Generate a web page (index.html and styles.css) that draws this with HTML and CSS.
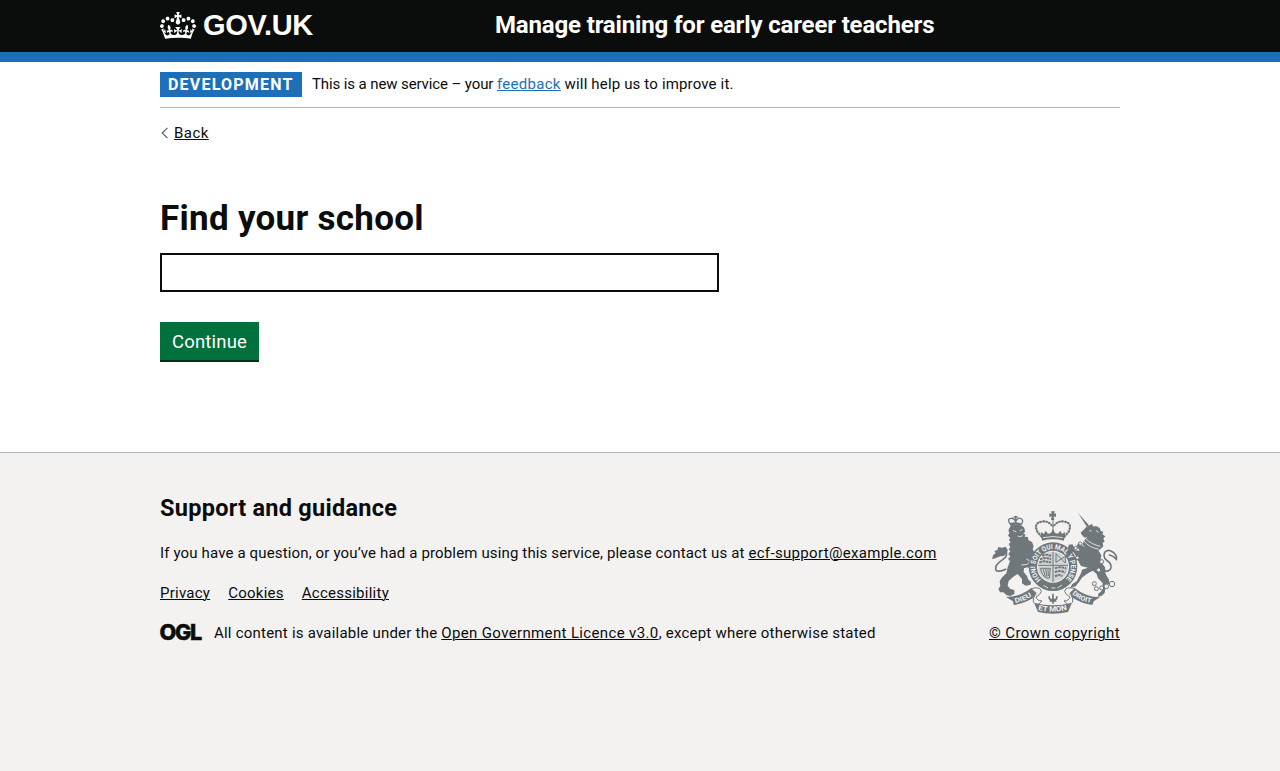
FILE: index.html
```html
<!DOCTYPE html>
<html lang="en">
<head>
<meta charset="utf-8">
<title>Find your school</title>
<link rel="stylesheet" href="styles.css">
</head>
<body>
<header class="header">
  <div class="container header-row">
    <a class="logo" href="#">
      <svg class="crown" viewBox="0 0 132 97" preserveAspectRatio="none" aria-hidden="true"><path fill="currentColor" fill-rule="evenodd" d="M25 30.2c3.5 1.5 7.7-.2 9.1-3.7 1.5-3.6-.2-7.8-3.9-9.2-3.6-1.4-7.6.3-9.1 3.9-1.4 3.5.3 7.5 3.9 9zM9 39.5c3.6 1.5 7.8-.2 9.2-3.7 1.5-3.6-.2-7.8-3.9-9.1-3.6-1.5-7.6.2-9.1 3.8-1.4 3.5.3 7.5 3.8 9zM4.4 57.2c3.5 1.5 7.7-.2 9.1-3.8 1.5-3.6-.2-7.7-3.9-9.1-3.5-1.5-7.6.3-9.1 3.8-1.4 3.5.3 7.6 3.9 9.1zm38.3-21.4c3.5 1.5 7.7-.2 9.1-3.8 1.5-3.6-.2-7.7-3.9-9.1-3.6-1.5-7.6.3-9.1 3.8-1.3 3.6.4 7.7 3.9 9.1zm64.4-5.6c-3.6 1.5-7.8-.2-9.1-3.7-1.5-3.6.2-7.8 3.8-9.2 3.6-1.4 7.7.3 9.2 3.9 1.3 3.5-.4 7.5-3.9 9zm15.9 9.3c-3.6 1.5-7.7-.2-9.1-3.7-1.5-3.6.2-7.8 3.7-9.1 3.6-1.5 7.7.2 9.2 3.8 1.5 3.5-.3 7.5-3.8 9zm4.7 17.7c-3.6 1.5-7.8-.2-9.2-3.8-1.5-3.6.2-7.7 3.9-9.1 3.6-1.5 7.7.3 9.2 3.8 1.3 3.5-.4 7.6-3.9 9.1zM89.3 35.8c-3.6 1.5-7.8-.2-9.2-3.8-1.4-3.6.2-7.7 3.9-9.1 3.6-1.5 7.7.3 9.2 3.8 1.4 3.6-.3 7.7-3.9 9.1zM69.7 17.7l8.9 4.7V9.3l-8.9 2.8c-.2-.3-.5-.6-.9-.9L72.4 0H59.6l3.5 11.2c-.3.3-.6.5-.9.9l-8.8-2.8v13.1l8.8-4.7c.3.3.6.7.9.9l-5 15.4v.1c-.2.8-.4 1.6-.4 2.4 0 4.1 3.1 7.5 7 8.1h.2c.3 0 .7.1 1 .1.4 0 .7 0 1-.1h.2c4-.6 7.1-4.1 7.1-8.1 0-.8-.1-1.7-.4-2.4V34l-5.1-15.4c.4-.2.7-.6 1-.9zM66 92.8c16.9 0 32.8 1.1 47.1 3.2 4-16.9 8.9-26.7 14-33.5l-9.6-3.4c1 4.9 1.1 7.2 0 10.2-1.5-1.4-3-4.3-4.2-8.7L108.6 76c2.8-2 5-3.2 7.5-3.3-4.4 9.4-10 11.9-13.6 11.2-4.3-.8-6.3-4.6-5.6-7.9 1-4.7 5.7-5.9 8-.5 4.3-8.7-3-11.4-7.6-8.8 7.1-7.2 7.9-13.5 2.1-21.1-8 6.1-8.1 12.3-4.5 20.8-4.7-5.4-12.1-2.5-9.5 6.2 3.4-5.2 7.9-2 7.2 3.1-.6 4.3-6.4 7.8-13.5 7.2-10.3-.9-10.9-8-11.2-13.8 2.5-.5 7.1 1.8 11 7.3L80.2 60c-4.1 4.4-8 5.3-12.3 5.4 1.4-4.4 8-11.6 8-11.6H55.5s6.4 7.2 7.9 11.6c-4.2-.1-8-1-12.3-5.4l1.4 16.4c3.9-5.5 8.5-7.7 10.9-7.3-.3 5.8-.9 12.8-11.1 13.8-7.2.6-12.9-2.9-13.5-7.2-.7-5 3.8-8.3 7.1-3.1 2.7-8.7-4.6-11.6-9.4-6.2 3.7-8.5 3.6-14.7-4.6-20.8-5.8 7.6-5 13.9 2.2 21.1-4.7-2.6-11.9.1-7.7 8.8 2.3-5.5 7.1-4.2 8.1.5.7 3.3-1.3 7.1-5.7 7.9-3.5.7-9-1.8-13.5-11.2 2.5.1 4.7 1.3 7.5 3.3l-4.7-15.4c-1.2 4.4-2.7 7.2-4.3 8.7-1.1-3-.9-5.3 0-10.2l-9.5 3.4c5 6.9 9.9 16.7 14 33.5 14.8-2.1 30.8-3.2 47.7-3.2z"/></svg>
      <span class="logo-text">GOV.UK</span>
    </a>
    <a class="service-name" href="#">Manage training for early career teachers</a>
  </div>
</header>
<div class="container">
  <div class="phase-banner">
    <strong class="tag">DEVELOPMENT</strong>
    <span class="phase-text">This is a new service – your <a class="link-blue" href="#">feedback</a><span class="phase-rest"> will help us to improve it.</span></span>
  </div>
  <div class="back-row">
    <svg class="chevron" viewBox="0 0 8 12" aria-hidden="true"><path d="M6.5 .8L1.1 6 6.5 11.2" fill="none" stroke="#505a5f" stroke-width="1.1"/></svg>
    <a class="back-link" href="#">Back</a>
  </div>
  <main class="main">
    <h1 class="heading"><label for="school">Find your school</label></h1>
    <input class="input" id="school" type="text">
    <button class="button" type="button">Continue</button>
  </main>
</div>
<footer class="footer">
  <div class="container footer-row">
    <div class="footer-main">
      <h2 class="footer-heading">Support and guidance</h2>
      <p class="footer-line support">If you have a question, or you’ve had a problem using this service, please contact us at <a class="email" href="#">ecf-support@example.com</a></p>
      <nav class="footer-links"><a href="#">Privacy</a><a href="#">Cookies</a><a href="#">Accessibility</a></nav>
      <div class="licence">
        <svg class="ogl" viewBox="0 0 41 18" role="img"><text x="-.6" y="16.5" textLength="41.5" lengthAdjust="spacingAndGlyphs">OGL</text></svg>
        <span class="licence-text">All content is available under the <a class="licence-link" href="#">Open Government Licence v3.0</a>, except where otherwise stated</span>
      </div>
    </div>
    <a class="copyright" href="#">
      <svg class="arms" viewBox="27 30 393 312" aria-hidden="true">
        <defs>
          <path id="ring" d="M183 239A53 53 0 1 1 255 239"/>
          <path id="left-ribbon" d="M106 309Q135 304 159 285"/>
          <path id="mid-ribbon" d="M174 330Q218 340 264 329"/>
          <path id="right-ribbon" d="M276 282Q300 304 336 309"/>
        </defs>
        <!-- lion -->
        <g class="solid">
          <path d="M93 76Q111 70 126 78L133 83L135 95L130 103L137 102L134 110L144 111L145 120L156 126L161 139L158 148L164 158L158 168L160 181L168 192L175 198L183 209L176 214L167 207L173 217L184 229L187 238L177 241L166 231L155 209L143 202L132 205L131 216L141 228L145 239L153 245L152 254L137 257L126 250L126 237L113 222L99 231L86 243L83 257L91 267L103 270L103 282L91 288L80 286L70 277L60 277L55 266L61 259L59 244L65 233L79 220L83 202L90 184L84 176L91 170L85 162L91 154L86 148L91 142L86 132L92 127L87 120L91 113L84 107L88 99L85 91Z"/>
          <path d="M36 178L40 164L47 160L43 153L52 150L55 141L66 143L77 140L83 149L81 160L71 168L61 169L48 174Z"/>
          <path d="M91 77L88 70Q107 63 126 71L124 78Q107 71 91 77Z"/>
        </g>
        <path class="line crownlet" d="M90 71Q80 56 93 55Q102 53 107 65Q113 52 121 55Q132 58 125 72M107 47V68M101 51h12"/>
        <path class="line thick" d="M76 151Q87 165 68 179Q43 196 47 209Q54 219 79 207"/>
        <path class="cut" d="M99 91l10 5M119 92l8-3M113 108l8 2 7-3M139 177l11 6-8 10-18 2"/>
        <!-- unicorn -->
        <path class="solid" d="M294 39L327 76L321 81Z"/>
        <path class="solid" d="M329 76L337 71L338 79L350 79L359 84L362 92L370 96L367 103L376 109L370 116L374 124L368 129L370 139L361 148L355 151L364 166L362 178L368 193L375 202L377 222L387 239L388 250L377 260L374 279L365 287L353 291L356 280L366 272L368 249L354 235L350 222L339 212L325 219L307 232L297 246L287 259L270 264L277 252L290 244L303 220L306 209L324 203L303 198L293 180L281 187L277 206L288 211L284 222L272 211L268 195L274 180L289 170L281 157L272 157L264 147L266 134L278 133L285 151L299 152L290 137L297 126L307 136L311 124L322 110L314 113L306 105L302 98L311 89L319 81Z"/>
        <path class="cut" d="M311 122Q328 144 356 147M316 115Q335 134 361 139M328 92l7 1M302 132l11 8M348 92l8 5"/>
        <path class="line thick" d="M366 210Q390 219 393 203Q395 190 380 181Q367 170 375 156Q386 145 401 158Q412 169 409 178Q397 165 386 165"/>
        <g class="chain">
          <circle cx="301" cy="131" r="5"/><circle cx="287" cy="144" r="5"/><circle cx="292" cy="173" r="5"/><circle cx="365" cy="185" r="6"/><circle cx="356" cy="210" r="6"/><circle cx="343" cy="251" r="6"/><circle cx="349" cy="266" r="6"/><circle cx="365" cy="264" r="6"/><circle cx="379" cy="259" r="7"/><circle cx="396" cy="252" r="8"/>
        </g>
        <!-- imperial crown -->
        <path class="solid" d="M213 34h12l-3 8 6-2v11l-7-2 2 11h-10l2-11-7 2V40l7 2Z"/>
        <path class="line" d="M187 114L172 98Q158 66 186 64Q206 60 219 80Q232 60 252 64Q280 66 266 98L251 114M219 60V98"/>
        <path class="beads" d="M184 108L172 94Q160 68 187 65Q206 62 218 80M254 108L266 94Q278 68 251 65Q232 62 220 80"/>
        <path class="solid" d="M182 107l2-11 8 6 5-10 7 9 9-2 6-12 6 12 9 2 7-9 5 10 8-6 2 11-5 15Q219 114 187 122Z"/>
        <path class="cut" d="M189 113Q219 106 248 113"/>
        <!-- garter and shield -->
        <circle class="solid" cx="219" cy="200" r="73"/>
        <circle class="field" cx="219" cy="200" r="48"/>
        <circle class="shield" cx="219" cy="200" r="45"/>
        <text class="garter"><textPath href="#ring" textLength="250" lengthAdjust="spacingAndGlyphs">HONI SOIT QUI MAL Y PENSE</textPath></text>
        <path class="line" d="M219 155V246M174 196H264"/>
        <path class="charges" d="M187 168q10-8 26 0M180 178q16-8 33 0M178 188q14-8 35 0M225 205q15-7 34 1M225 217q14-8 31 1M225 229q12-8 22 0"/>
        <path class="line" d="M228 161l28 28v-20l-28 18zM181 205h30l-3 29q-19 4-27-29M190 208l6 22M197 207l4 23M204 207l1 21"/>
        <path class="cut" d="M190 256l14 8M246 255l-14 9M214 264h12"/>
        <!-- ribbon -->
        <g class="solid">
          <path d="M78 291Q119 291 153 265L169 278L159 294Q134 310 101 315L99 304Z"/>
          <path d="M360 292Q319 292 285 265L269 278L279 294Q304 310 337 315L341 304Z"/>
          <path d="M162 308Q219 323 276 308L264 336Q219 346 174 336Z"/>
        </g>
        <path class="line thick" d="M219 281V311M217 299Q205 299 208 289M221 299Q233 299 230 289M209 303h20"/>
        <path class="line" d="M153 266Q181 258 184 274Q182 284 168 291Q170 302 186 303L175 313M161 308Q156 292 170 281M285 266Q257 258 254 274Q256 284 270 291Q268 302 252 303L263 313M277 308Q282 292 268 281"/>
        <g class="motto">
          <text><textPath href="#left-ribbon" textLength="54" lengthAdjust="spacingAndGlyphs">DIEU</textPath></text>
          <text class="wide"><textPath href="#mid-ribbon" textLength="88" lengthAdjust="spacingAndGlyphs">ET MON</textPath></text>
          <text><textPath href="#right-ribbon" textLength="64" lengthAdjust="spacingAndGlyphs">DROIT</textPath></text>
        </g>
      </svg>
      <span class="copyright-text">© Crown copyright</span>
    </a>
  </div>
</footer>
</body>
</html>
```
FILE: styles.css
```css
* { box-sizing: border-box; }
body { margin: 0; background: #fff; color: #0b0c0c; font: 15px/20px Roboto, "Liberation Sans", sans-serif; letter-spacing: .18px; }
a { color: inherit; text-decoration: underline; text-decoration-thickness: 1px; text-underline-offset: 1px; }
.container { width: 960px; margin: 0 auto; }
.header { height: 62px; background: #0b0c0c; border-bottom: 10px solid #1d70b8; color: #fff; }
.header-row { display: flex; height: 50px; align-items: center; }
.header a { text-decoration: none; }
.logo { display: flex; align-items: center; width: 335px; }
.crown { width: 36px; height: 27px; margin-right: 7px; }
.logo-text { font: 700 29px/30px "Liberation Sans", sans-serif; letter-spacing: -.3px; }
.service-name { font-size: 24px; line-height: 30px; font-weight: 700; letter-spacing: -.16px; white-space: nowrap; }
.phase-banner { display: flex; align-items: center; height: 46px; border-bottom: 1px solid #b1b4b6; gap: 10px; }
.phase-text { letter-spacing: -.11px; padding-bottom: 2px; }
.phase-rest { letter-spacing: .16px; }
.tag { width: 142px; height: 25px; padding-left: 8px; background: #1d70b8; color: #fff; font-size: 16px; line-height: 26px; letter-spacing: 1.2px; }
.link-blue { color: #1d70b8; letter-spacing: .3px; }
.back-row { display: flex; align-items: center; gap: 5px; margin-top: 15px; height: 20px; padding-left: 1px; }
.back-link { letter-spacing: .45px; }
.chevron { width: 8px; height: 12px; }
.main { padding-top: 50px; height: 309px; }
.heading { margin: 0; padding-top: 6px; height: 60px; font-size: 35px; line-height: 40px; letter-spacing: .28px; }
.input { display: block; width: 559px; height: 39px; border: 2px solid #0b0c0c; border-radius: 0; background: #fff; }
.button { display: block; width: 99px; height: 40px; margin-top: 30px; padding: 2px 0 0; border: 0; border-bottom: 2px solid #002d18; background: #00703c; color: #fff; font: 18.5px/36px Roboto, sans-serif; letter-spacing: .2px; }
.footer { height: 319px; border-top: 1px solid #b1b4b6; background: #f3f2f1; padding-top: 40px; }
.footer-row { display: flex; justify-content: space-between; }
.footer-main { white-space: nowrap; }
.footer-heading { margin: 0 0 20px; font-size: 23.5px; line-height: 30px; letter-spacing: .27px; }
.footer-line { margin: 0 0 20px; }
.support { letter-spacing: .145px; }
.email { letter-spacing: .33px; }
.footer-links { display: flex; gap: 18px; margin-bottom: 20px; letter-spacing: .25px; }
.licence { display: flex; align-items: center; height: 20px; gap: 13px; letter-spacing: .27px; }
.licence-text { letter-spacing: .22px; }
.licence-link { letter-spacing: .36px; }
.ogl { width: 41px; height: 18px; margin-top: -2px; overflow: visible; }
.ogl text { font: 800 22px Inter, sans-serif; letter-spacing: -1.3px; fill: #0b0c0c; stroke: #0b0c0c; stroke-width: .5px; }
.copyright { display: flex; flex-direction: column; align-items: flex-end; padding-top: 17px; white-space: nowrap; letter-spacing: .4px; }
.arms { width: 131px; height: 104px; margin-bottom: 9px; }
.solid { fill: #6f777b; }
.field, .chain { fill: #f3f2f1; }
.shield { fill: #6f777b; fill-opacity: .25; }
.line, .chain, .cut, .charges, .beads { stroke: #6f777b; stroke-width: 3; }
.line, .cut, .charges, .beads { fill: none; }
.thick { stroke-width: 5; }
.crownlet { stroke-width: 4; }
.cut { stroke: #f3f2f1; stroke-width: 2.5; }
.charges { stroke-width: 6; stroke-dasharray: 8 2; }
.beads { stroke-width: 7; stroke-linecap: round; stroke-dasharray: 0 9; }
.garter { font: 700 21px Roboto, sans-serif; fill: #f3f2f1; letter-spacing: 0; }
.motto { font: 700 20px Roboto, sans-serif; fill: #f3f2f1; letter-spacing: 0; }
.wide { font-size: 22px; }
```
